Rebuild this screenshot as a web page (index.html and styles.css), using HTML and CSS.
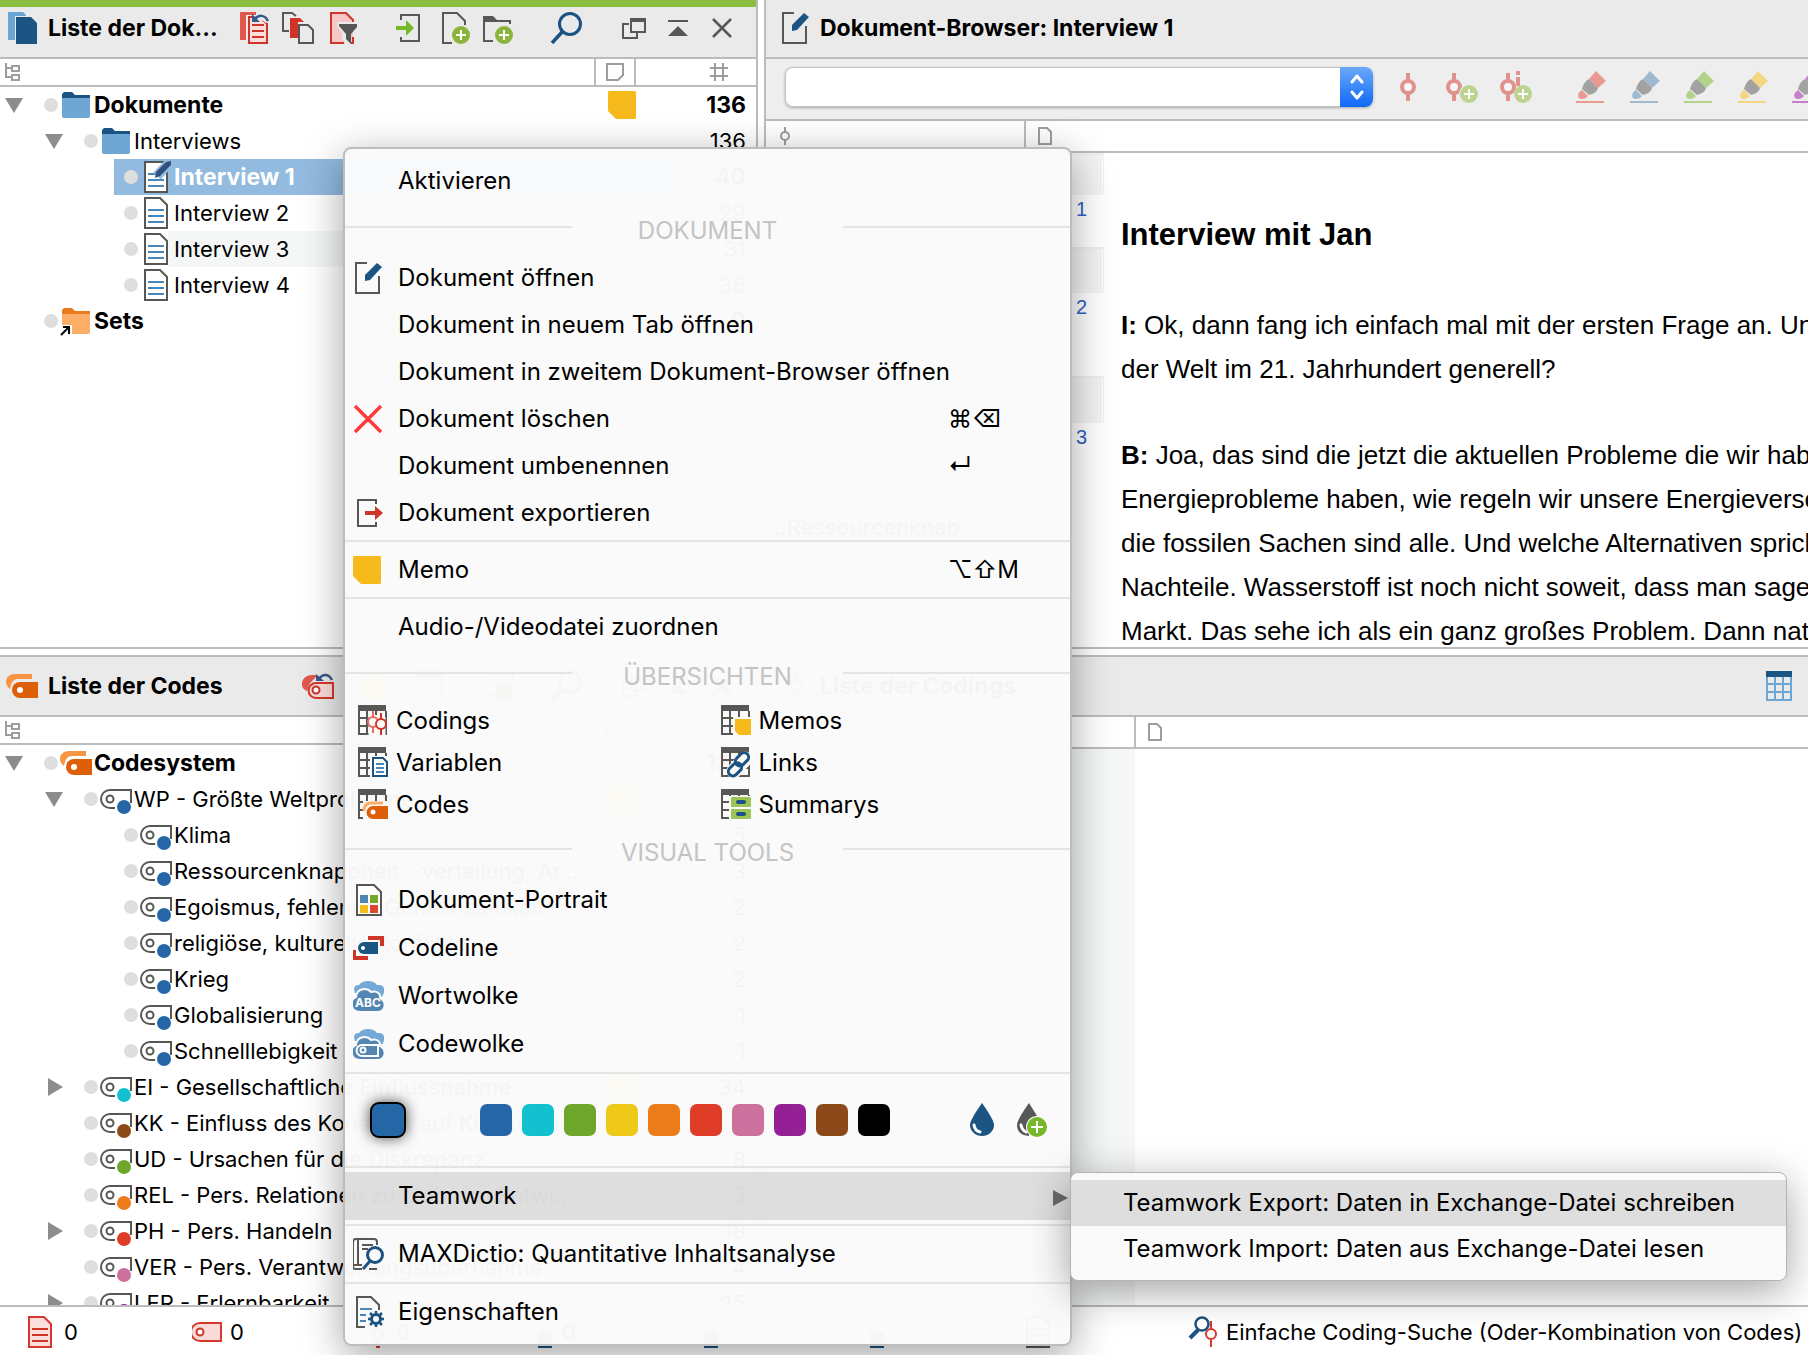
FILE: index.html
```html
<!DOCTYPE html>
<html lang="de">
<head>
<meta charset="utf-8">
<title>Interview 1</title>
<link rel="stylesheet" href="styles.css">
</head>
<body>
<svg class="defs" aria-hidden="true">
  <symbol id="i-docs" viewBox="0 0 32 32"><path fill="#69a5d5" d="M2 0h15l3 3v1H9v24H2z"/><path fill="#1b5382" d="M10 5h15l6 6v21H10z"/></symbol>
  <symbol id="i-reset" viewBox="0 0 32 32"><path fill="#e0594c" d="M2 0h16v3H8v25H2z"/><path fill="#fbdedb" stroke="#cf3527" stroke-width="2" d="M11 5h11l7 7v19H11z"/><path stroke="#cf3527" stroke-width="2" d="M14 13h12M14 19h12M14 25h12"/><path fill="none" stroke="#eaeaea" stroke-width="6" d="M17 8c5-5 11-3 13 2"/><path fill="none" stroke="#35588a" stroke-width="2.500" d="M17 7c4-5 10-4 13 2"/><path fill="#35588a" d="M14 2v8h8z"/></symbol>
  <symbol id="i-copies" viewBox="0 0 32 32"><path fill="none" stroke="#575756" stroke-width="2" d="M7 19H1V1h9l4 3"/><path fill="#cf3527" d="M8 6h10l4 4h-6v16H8z"/><path fill="none" stroke="#575756" stroke-width="2" d="M17 13h9l5 5v13H17z"/></symbol>
  <symbol id="i-filter" viewBox="0 0 32 32"><path fill="#f7c6c6" d="M5 1h14l8 8v22H5z"/><path fill="none" stroke="#cf3527" stroke-width="2" d="M27 10V8l-7-7H5v30h13M27 25v6h-2"/><path fill="#eaeaea" d="M11 10h20v5l-6 6v11h-4l-5-5v-6l-5-7z"/><path fill="#575756" d="M13 12h18v3l-6 7v10l-5-5v-5l-7-8z"/></symbol>
  <symbol id="i-import" viewBox="0 0 32 32"><path fill="none" stroke="#575756" stroke-width="2" d="M7 8V3h18v26H7v-4"/><path fill="#76b82a" d="M2 14h10V8l8 8-8 8v-6H2z"/></symbol>
  <symbol id="i-docplus" viewBox="0 0 32 32"><path fill="none" stroke="#575756" stroke-width="2" d="M14 31H5V1h14l8 8v4"/><circle cx="23" cy="23" r="9" fill="#8ab53a"/><path stroke="#fff" stroke-width="2" d="M23 18v10M18 23h10"/></symbol>
  <symbol id="i-folderplus" viewBox="0 0 32 32"><path fill="#575756" d="M1 4h10l4 4h14v4h-2v-2H3v18h8v2H1z"/><circle cx="22" cy="23" r="9" fill="#8ab53a"/><path stroke="#fff" stroke-width="2" d="M22 18v10M17 23h10"/></symbol>
  <symbol id="i-search" viewBox="0 0 32 32"><circle cx="20" cy="12" r="10.500" fill="none" stroke="#1b5382" stroke-width="3"/><path stroke="#1b5382" stroke-width="3.500" d="M13 19L2 31"/></symbol>
  <symbol id="i-windows" viewBox="0 0 32 32"><path fill="none" stroke="#575756" stroke-width="2" d="M11 12H5v14h14v-5M13 7h14v13H13z"/><path fill="#575756" d="M12 6h16v4H12z"/></symbol>
  <symbol id="i-up" viewBox="0 0 32 32"><path fill="#575756" d="M6 8h20v2H6zM16 14l10 10H6z"/></symbol>
  <symbol id="i-close" viewBox="0 0 32 32"><path stroke="#575756" stroke-width="2.500" d="M7 7l18 18M25 7L7 25"/></symbol>
  <symbol id="i-tree" viewBox="0 0 16 18"><path fill="none" stroke="#9d9d9c" stroke-width="2" d="M1 0v14h5M1 5h5M7 3h7v5H7zM7 12h7v5H7z"/></symbol>
  <symbol id="i-note" viewBox="0 0 18 18"><path fill="none" stroke="#9d9d9c" stroke-width="2" d="M1 1h16v11l-5 5H1z"/></symbol>
  <symbol id="i-hash" viewBox="0 0 18 18"><path stroke="#9d9d9c" stroke-width="2" d="M5 0v18M13 0v18M0 5h18M0 13h18"/></symbol>
  <symbol id="i-page" viewBox="0 0 14 18"><path fill="none" stroke="#9d9d9c" stroke-width="2" d="M1 1h8l4 4v12H1z"/></symbol>
  <symbol id="i-pingrey" viewBox="0 0 14 18"><path fill="none" stroke="#9d9d9c" stroke-width="2" d="M7 0v5M7 13v5"/><circle cx="7" cy="9" r="4" fill="none" stroke="#9d9d9c" stroke-width="2"/></symbol>
  <symbol id="i-folder" viewBox="0 0 32 32"><path fill="#1b5382" d="M2 5l2-2h8l3 3h15v5H2z"/><path fill="#6ea6d4" d="M2 9h28v18a2 2 0 0 1-2 2H4a2 2 0 0 1-2-2z"/></symbol>
  <symbol id="i-sets" viewBox="0 0 32 32"><path fill="#ea7a1b" d="M2 5l2-2h8l3 3h15v5H2z"/><path fill="#fcad68" d="M2 9h28v18a2 2 0 0 1-2 2H4a2 2 0 0 1-2-2z"/><path fill="#fff" d="M2 20h10v10H2z"/><path fill="none" stroke="#000" stroke-width="2" d="M1 30l8-8M3 22h6v7"/></symbol>
  <symbol id="i-doc" viewBox="0 0 32 32"><path fill="#fff" stroke="#575756" stroke-width="2" d="M5 1h15l7 7v23H5z"/><path stroke="#4a86b8" stroke-width="2" d="M8 13h16M8 19h16M8 25h16"/></symbol>
  <symbol id="i-docpen" viewBox="0 0 32 32"><path fill="#fff" stroke="#575756" stroke-width="2" d="M5 1h22v30H5z"/><path stroke="#4a86b8" stroke-width="2" d="M8 13h16M8 19h16M8 25h16"/><path stroke="#92bbdf" stroke-width="10" d="M30 1L17 15"/><path fill="#30507f" d="M26 1l5-1v4L20 15l-5 2 1-6z"/></symbol>
  <symbol id="i-editdoc" viewBox="0 0 32 32"><path fill="none" stroke="#575756" stroke-width="2" d="M14 1H3v30h23V14"/><path fill="#1b5382" d="M24 1l5 4-12 13-5 1 0-6z"/></symbol>
  <symbol id="i-codes" viewBox="0 0 32 32"><path fill="#f79543" d="M26 4v5H12C7 9 5 13 4 19 1 17 0 14 0 12c0-5 4-8 9-8z"/><path fill="#dd5f07" d="M32 12v16H14a8 8 0 0 1 0-16z"/><circle cx="14" cy="20" r="3" fill="#fff"/></symbol>
  <symbol id="i-code" viewBox="0 0 32 32"><path fill="none" stroke="#575756" stroke-width="2" d="M15 25h-5a9 9 0 0 1 0-18h21v13"/><circle cx="10" cy="16" r="3.500" fill="none" stroke="#575756" stroke-width="2"/><circle cx="24" cy="24" r="7" fill="currentColor"/></symbol>
  <symbol id="i-resetcodes" viewBox="0 0 32 32"><path fill="#e0594c" d="M16 5l-6 6c-3 3-4 6-5 10C1 19 0 17 0 14c0-5 4-9 10-9z"/><path fill="#f9dcda" stroke="#d6382b" stroke-width="2" d="M31 13v15H14a7.500 7.500 0 0 1 0-15z"/><circle cx="14" cy="20" r="3.500" fill="#fff" stroke="#cf3527" stroke-width="2"/><path fill="none" stroke="#35588a" stroke-width="2.500" d="M17 9c4-6 10-5 13 1"/><path fill="#35588a" d="M14 4v7h8z"/></symbol>
  <symbol id="i-memo" viewBox="0 0 28 28"><path fill="#f6ba1c" d="M0 1l1-1h26l1 1v26l-1 1H8L0 20z"/></symbol>
  <symbol id="i-tablecolor" viewBox="0 0 32 32"><path fill="none" stroke="#6ea6d4" stroke-width="2" d="M3 6h24v24H3zM11 6v24M19 6v24M3 14h24M3 22h24"/><path fill="#1b5382" d="M2 1h26v6H2z"/></symbol>
  <symbol id="i-smile" viewBox="0 0 32 32"><circle cx="16" cy="16" r="14" fill="#f6ba1c"/></symbol>
  <symbol id="i-codeplus" viewBox="0 0 32 32"><path fill="none" stroke="#575756" stroke-width="2" d="M12 24h-2A9 9 0 0 1 10 4h21v8"/><circle cx="22" cy="22" r="9" fill="#8ab53a"/></symbol>
  <symbol id="i-pin" viewBox="0 0 32 32"><path stroke="#e0938d" stroke-width="4" d="M16 2v9M16 21v9"/><circle cx="16" cy="16" r="6" fill="#f6f6f6" stroke="#e0938d" stroke-width="4"/></symbol>
  <symbol id="i-pinplus" viewBox="0 0 32 32"><path stroke="#e0938d" stroke-width="4" d="M8 2v9M8 21v9"/><circle cx="8" cy="16" r="6" fill="#f6f6f6" stroke="#e0938d" stroke-width="4"/><circle cx="23" cy="23" r="10" fill="#eee"/><circle cx="23" cy="23" r="9" fill="#bcd391"/><path stroke="#fff" stroke-width="2" d="M23 18v10M18 23h10"/></symbol>
  <symbol id="i-pininfo" viewBox="0 0 32 32"><path stroke="#e0938d" stroke-width="4" d="M8 2v9M8 21v9M18 0v4M18 6v9"/><circle cx="8" cy="16" r="6" fill="#f6f6f6" stroke="#e0938d" stroke-width="4"/><circle cx="23" cy="23" r="9" fill="#bcd391"/><path stroke="#fff" stroke-width="2" d="M23 18v10M18 23h10"/></symbol>
  <symbol id="i-marker" viewBox="0 0 32 32"><path fill="currentColor" d="M20 0l10 10-8 7-9-9zM6 19l6 6c-2 3-7 4-9 2-2-3 0-6 3-8zM0 30h28v2H0z"/><path fill="#a3a2a2" d="M13 8l9 9c-1 4-5 6-9 7l-7-6c1-4 3-8 7-10z"/></symbol>
  <symbol id="i-delete" viewBox="0 0 32 32"><path stroke="#ff3b3b" stroke-width="3.500" d="M2 3l26 26M28 3L2 29"/></symbol>
  <symbol id="i-export" viewBox="0 0 32 32"><path fill="none" stroke="#575756" stroke-width="2" d="M23 7V3H5v26h18v-4"/><path fill="#cf3527" d="M12 14h10V9l8 7-8 7v-5H12z"/></symbol>
  <symbol id="i-table" viewBox="0 0 32 32"><path fill="none" stroke="#575756" stroke-width="2" d="M1 6v23h27V6M9 6v23M18 6v23M1 13h27M1 21h27"/><path fill="#575756" d="M0 0h28v6H0z"/></symbol>
  <symbol id="i-t-codings" viewBox="0 0 32 32"><use href="#i-table"/><path stroke="#fafafa" stroke-width="9" d="M15 10v20M23 12v20"/><g fill="#fafafa" stroke-width="2"><path stroke="#f0685c" d="M15 6v6M15 22v6"/><circle cx="15" cy="17" r="5" stroke="#f0685c"/><path stroke="#cf3527" d="M23 8v6M23 24v6"/><circle cx="23" cy="19" r="5" stroke="#cf3527"/></g></symbol>
  <symbol id="i-t-vars" viewBox="0 0 32 32"><use href="#i-table"/><path fill="#fafafa" d="M12 9h20v23H12z"/><path fill="#fff" stroke="#1b5382" stroke-width="2" d="M15 11h10l4 4v14H15z"/><path stroke="#4a86b8" stroke-width="2" d="M18 17h8M18 21h8M18 25h8"/></symbol>
  <symbol id="i-t-codes" viewBox="0 0 32 32"><use href="#i-table"/><path fill="#fafafa" d="M5 12h27v20H5z"/><path fill="none" stroke="#fcad68" stroke-width="3" d="M25 14H13q-7 0-7 8"/><path fill="#dd5f07" d="M30 17v13H15a6.500 6.500 0 0 1 0-13z"/><circle cx="15" cy="23" r="2.500" fill="#fff"/></symbol>
  <symbol id="i-t-memos" viewBox="0 0 32 32"><use href="#i-table"/><path fill="#fafafa" d="M12 12h20v20H12z"/><path fill="#f6ba1c" d="M14 14h16v16H18l-4-4z"/></symbol>
  <symbol id="i-t-links" viewBox="0 0 32 32"><use href="#i-table"/><path stroke="#fafafa" stroke-width="15" stroke-linecap="round" d="M13 24L24 12"/><g fill="none" stroke="#1b5382" stroke-width="3"><rect x="14" y="8" width="15" height="9" rx="4.500" transform="rotate(-45 21 13)"/><rect x="7" y="18" width="15" height="9" rx="4.500" transform="rotate(-45 14 23)"/></g></symbol>
  <symbol id="i-t-sums" viewBox="0 0 32 32"><use href="#i-table"/><path fill="#fafafa" d="M8 7h24v25H8z"/><rect x="10" y="8" width="20" height="10" rx="1" fill="#9dc456"/><rect x="10" y="20" width="20" height="10" rx="1" fill="#9dc456"/><path stroke="#1b5382" stroke-width="4" stroke-linecap="round" d="M17 13h6M17 25h6"/></symbol>
  <symbol id="i-portrait" viewBox="0 0 32 32"><path fill="#fff" stroke="#575756" stroke-width="2" d="M4 1h17l7 7v23H4z"/><path fill="#4f85b5" d="M7 11h8v8H7z"/><path fill="#76a82c" d="M17 11h8v8h-8z"/><path fill="#f6ba1c" d="M7 21h8v8H7z"/><path fill="#dd4730" d="M17 21h8v8h-8z"/></symbol>
  <symbol id="i-codeline" viewBox="0 0 32 32"><path fill="#cf3527" d="M15 4h16v10h-4V8H15zM-1 18h4v6h12v4H-1z"/><path fill="#1b5382" d="M25 10v12H11a6 6 0 0 1 0-12z"/><circle cx="10" cy="16" r="2" fill="#fff"/></symbol>
  <symbol id="i-cloud" viewBox="0 0 32 32"><path fill="#72a9d9" d="M2 13Q-1 5 6 5 9 1 15 1q6 0 9 4 8-1 7 6 0 4-3 6z"/><path fill="#5486b3" stroke="#fafafa" stroke-width="2" d="M8 32C-3 32-4 20 3 17 4 8 14 7 18 12c6-2 10 2 9 6 7 4 6 14-3 14z"/></symbol>
  <symbol id="i-wordcloud" viewBox="0 0 32 32"><use href="#i-cloud"/><text x="15" y="27" text-anchor="middle" font-family="Inter, sans-serif" font-weight="700" font-size="12" fill="#fff">ABC</text></symbol>
  <symbol id="i-codecloud" viewBox="0 0 32 32"><use href="#i-cloud"/><path fill="none" stroke="#fff" stroke-width="2" d="M25 17v11H9a5.500 5.500 0 0 1 0-11z"/><circle cx="10" cy="22" r="2.500" fill="none" stroke="#fff" stroke-width="2"/></symbol>
  <symbol id="i-drop" viewBox="0 0 32 34"><path fill="#1b5382" d="M16 0q12 17 12 22a12 11 0 0 1-24 0Q4 17 16 0z"/><path fill="none" stroke="#fff" stroke-width="3" stroke-linecap="round" d="M8 22q1 6 6 7"/></symbol>
  <symbol id="i-dropplus" viewBox="0 0 32 34"><path fill="#575756" d="M12 0q5 8 8 13l-8 8v12Q0 32 0 22 0 17 12 0z"/><path fill="none" stroke="#fff" stroke-width="3" stroke-linecap="round" d="M4 22q1 5 5 7"/><circle cx="20" cy="24" r="11" fill="#fafafa"/><circle cx="20" cy="24" r="10" fill="#76b82a"/><path stroke="#fff" stroke-width="2" d="M20 18v12M14 24h12"/></symbol>
  <symbol id="i-dictio" viewBox="0 0 32 32"><path fill="none" stroke="#575756" stroke-width="2" d="M9 31H2q-2 0-2-3V4q0-3 3-3h18q3 0 3 3v3M5 1v26M0 27h9M16 31h8M9 7h11M9 11h6"/><circle cx="22" cy="17" r="7.500" fill="none" stroke="#1b5382" stroke-width="3"/><path stroke="#1b5382" stroke-width="3" d="M17 23l-7 8"/></symbol>
  <symbol id="i-props" viewBox="0 0 32 32"><path fill="none" stroke="#575756" stroke-width="2" d="M12 31H4V1h14l8 8v5"/><path stroke="#4a86b8" stroke-width="2" d="M7 13h12M7 19h6M7 25h6"/><circle cx="23" cy="23" r="4.500" fill="none" stroke="#1b5382" stroke-width="3"/><path stroke="#1b5382" stroke-width="2.500" d="M23 15v3M23 28v3M15 23h3M28 23h3M17 17l3 3M26 26l3 3M29 17l-3 3M20 26l-3 3"/></symbol>
  <symbol id="i-docred" viewBox="0 0 32 32"><path fill="#fbdedd" stroke="#d6382b" stroke-width="2" d="M3 1h15l7 7v23H3z"/><path stroke="#cf3527" stroke-width="2" d="M6 13h16M6 19h16M6 25h16"/></symbol>
  <symbol id="i-tagred" viewBox="0 0 32 32"><path fill="#f9dcda" stroke="#d6382b" stroke-width="2" d="M29 7v18H8A9 9 0 0 1 8 7z"/><circle cx="8" cy="16" r="3.500" fill="#fff" stroke="#cf3527" stroke-width="2"/></symbol>
  <symbol id="i-pinred" viewBox="0 0 32 32"><path stroke="#cf3527" stroke-width="4" d="M20 4v9M20 23v9"/><circle cx="20" cy="18" r="5" fill="none" stroke="#cf3527" stroke-width="3"/></symbol>
  <symbol id="i-blue" viewBox="0 0 32 32"><path fill="#1b5382" d="M14 16h14v16H14z"/></symbol>
  <symbol id="i-codesearch" viewBox="0 0 32 32"><circle cx="14" cy="8" r="6.500" fill="none" stroke="#1b5382" stroke-width="2.500"/><path stroke="#1b5382" stroke-width="4" d="M10 14l-8 8"/><path stroke="#d6382b" stroke-width="2" d="M23 5v8M23 24v7"/><circle cx="23" cy="18" r="5" fill="#fff" stroke="#d6382b" stroke-width="2"/></symbol>
</svg>

<div class="app">
  <main class="workspace">
    <section class="panel docs" aria-label="Liste der Dokumente">
      <header class="bar bar-green">
        <svg class="ic"><use href="#i-docs"/></svg>
        <h2 class="bar-title">Liste der Dok...</h2>
        <div class="tools">
          <div class="group"><button aria-label="Aktivierungen zurücksetzen"><svg class="ic"><use href="#i-reset"/></svg></button><button aria-label="Nur aktivierte Dokumente"><svg class="ic"><use href="#i-copies"/></svg></button><button aria-label="Filter"><svg class="ic"><use href="#i-filter"/></svg></button></div>
          <div class="group"><button aria-label="Importieren"><svg class="ic"><use href="#i-import"/></svg></button><button aria-label="Neues Dokument"><svg class="ic"><use href="#i-docplus"/></svg></button><button aria-label="Neue Dokumentgruppe"><svg class="ic"><use href="#i-folderplus"/></svg></button></div>
          <div class="group"><button aria-label="Suchen"><svg class="ic"><use href="#i-search"/></svg></button></div>
          <div class="group"><button aria-label="Abdocken"><svg class="ic"><use href="#i-windows"/></svg></button><button aria-label="Minimieren"><svg class="ic"><use href="#i-up"/></svg></button><button aria-label="Schließen"><svg class="ic"><use href="#i-close"/></svg></button></div>
        </div>
      </header>
      <div class="cols"><span class="col-name"><svg class="ic-tree"><use href="#i-tree"/></svg></span><span class="col-memo"><svg class="ic-18"><use href="#i-note"/></svg></span><span class="col-count"><svg class="ic-18"><use href="#i-hash"/></svg></span></div>
      <ul class="tree">
        <li class="row strong"><span class="twist down"></span><span class="cell"><i class="dot"></i><svg class="ic"><use href="#i-folder"/></svg>Dokumente</span><svg class="memo"><use href="#i-memo"/></svg><span class="count">136</span></li>
        <li class="row l1"><span class="twist down"></span><span class="cell"><i class="dot"></i><svg class="ic"><use href="#i-folder"/></svg>Interviews</span><span class="count">136</span></li>
        <li class="row l2 strong selected"><span class="twist"></span><span class="cell"><i class="dot"></i><svg class="ic"><use href="#i-docpen"/></svg>Interview 1</span><span class="count">40</span></li>
        <li class="row l2"><span class="twist"></span><span class="cell"><i class="dot"></i><svg class="ic"><use href="#i-doc"/></svg>Interview 2</span><span class="count">29</span></li>
        <li class="row l2 striped"><span class="twist"></span><span class="cell"><i class="dot"></i><svg class="ic"><use href="#i-doc"/></svg>Interview 3</span><span class="count">31</span></li>
        <li class="row l2"><span class="twist"></span><span class="cell"><i class="dot"></i><svg class="ic"><use href="#i-doc"/></svg>Interview 4</span><span class="count">36</span></li>
        <li class="row strong"><span class="twist"></span><span class="cell"><i class="dot"></i><svg class="ic"><use href="#i-sets"/></svg>Sets</span><span class="count">0</span></li>
      </ul>
    </section>

    <section class="panel browser" aria-label="Dokument-Browser">
      <header class="bar">
        <svg class="ic"><use href="#i-editdoc"/></svg>
        <h2 class="bar-title">Dokument-Browser: Interview 1</h2>
      </header>
      <div class="toolbar">
        <div class="combo"><select aria-label="Code"><option></option></select><span class="combo-cap"><svg viewBox="0 0 16 26"><path fill="none" stroke="#fff" stroke-width="3" stroke-linecap="round" stroke-linejoin="round" d="M3 8l5-6 5 6M3 18l5 6 5-6"/></svg></span></div>
        <div class="marks"><button aria-label="Codieren"><svg class="ic"><use href="#i-pin"/></svg></button><button aria-label="Mit neuem Code codieren"><svg class="ic"><use href="#i-pinplus"/></svg></button><button aria-label="In-Vivo codieren"><svg class="ic"><use href="#i-pininfo"/></svg></button></div>
        <div class="marks"><button class="m-red" aria-label="Rot markieren"><svg class="ic"><use href="#i-marker"/></svg></button><button class="m-blue" aria-label="Blau markieren"><svg class="ic"><use href="#i-marker"/></svg></button><button class="m-green" aria-label="Grün markieren"><svg class="ic"><use href="#i-marker"/></svg></button><button class="m-yellow" aria-label="Gelb markieren"><svg class="ic"><use href="#i-marker"/></svg></button><button class="m-violet" aria-label="Violett markieren"><svg class="ic"><use href="#i-marker"/></svg></button></div>
      </div>
      <div class="cols cols-doc"><span class="col-codes"><svg class="ic-page"><use href="#i-pingrey"/></svg></span><span class="col-page"><svg class="ic-page"><use href="#i-page"/></svg></span></div>
      <div class="reader">
        <div class="stripes">..Ressourcenknap</div>
        <div class="gutter">
          <span class="para p1">1</span>
          <span class="para p2">2</span>
          <span class="para p3">3</span>
        </div>
        <article class="text">
          <h1>Interview mit Jan</h1>
          <p><b>I:</b> Ok, dann fang ich einfach mal mit der ersten Frage an. Und<br>der Welt im 21. Jahrhundert generell?</p>
          <p><b>B:</b> Joa, das sind die jetzt die aktuellen Probleme die wir haben<br>Energieprobleme haben, wie regeln wir unsere Energieversorgung<br>die fossilen Sachen sind alle. Und welche Alternativen sprich<br>Nachteile. Wasserstoff ist noch nicht soweit, dass man sagen<br>Markt. Das sehe ich als ein ganz großes Problem. Dann natürlich</p>
        </article>
      </div>
    </section>

    <section class="panel codes" aria-label="Liste der Codes">
      <header class="bar">
        <svg class="ic"><use href="#i-codes"/></svg>
        <h2 class="bar-title">Liste der Codes</h2>
        <div class="tools">
          <div class="group wide"><button aria-label="Code-Aktivierungen zurücksetzen"><svg class="ic"><use href="#i-resetcodes"/></svg></button><button aria-label="Emoticode"><svg class="ic"><use href="#i-smile"/></svg></button><button aria-label="Tabelle"><svg class="ic"><use href="#i-tablecolor"/></svg></button></div>
          <div class="group"><button aria-label="Neuer Code"><svg class="ic"><use href="#i-codeplus"/></svg></button></div>
          <div class="group"><button aria-label="Suchen"><svg class="ic"><use href="#i-search"/></svg></button></div>
          <div class="group"><button aria-label="Abdocken"><svg class="ic"><use href="#i-windows"/></svg></button><button aria-label="Minimieren"><svg class="ic"><use href="#i-up"/></svg></button><button aria-label="Schließen"><svg class="ic"><use href="#i-close"/></svg></button></div>
        </div>
      </header>
      <div class="cols"><span class="col-name"><svg class="ic-tree"><use href="#i-tree"/></svg></span><span class="col-memo"><svg class="ic-18"><use href="#i-note"/></svg></span><span class="col-count"></span></div>
      <ul class="tree">
        <li class="row strong"><span class="twist down"></span><span class="cell"><i class="dot"></i><svg class="ic"><use href="#i-codes"/></svg>Codesystem</span><span class="count">136</span></li>
        <li class="row l1 c-blue"><span class="twist down"></span><span class="cell"><i class="dot"></i><svg class="ic"><use href="#i-code"/></svg>WP - Größte Weltprobleme</span><svg class="memo"><use href="#i-memo"/></svg><span class="count">0</span></li>
        <li class="row l2 c-blue"><span class="twist"></span><span class="cell"><i class="dot"></i><svg class="ic"><use href="#i-code"/></svg>Klima</span><span class="count">5</span></li>
        <li class="row l2 c-blue"><span class="twist"></span><span class="cell"><i class="dot"></i><svg class="ic"><use href="#i-code"/></svg>Ressourcenknappheit, -verteilung, Ar...</span><span class="count">3</span></li>
        <li class="row l2 c-blue"><span class="twist"></span><span class="cell"><i class="dot"></i><svg class="ic"><use href="#i-code"/></svg>Egoismus, fehlende Gemeinsamkeit</span><span class="count">2</span></li>
        <li class="row l2 c-blue"><span class="twist"></span><span class="cell"><i class="dot"></i><svg class="ic"><use href="#i-code"/></svg>religiöse, kulturelle Konflikte</span><span class="count">2</span></li>
        <li class="row l2 c-blue"><span class="twist"></span><span class="cell"><i class="dot"></i><svg class="ic"><use href="#i-code"/></svg>Krieg</span><span class="count">2</span></li>
        <li class="row l2 c-blue"><span class="twist"></span><span class="cell"><i class="dot"></i><svg class="ic"><use href="#i-code"/></svg>Globalisierung</span><span class="count">1</span></li>
        <li class="row l2 c-blue"><span class="twist"></span><span class="cell"><i class="dot"></i><svg class="ic"><use href="#i-code"/></svg>Schnelllebigkeit</span><span class="count">1</span></li>
        <li class="row l1 c-cyan"><span class="twist right"></span><span class="cell"><i class="dot"></i><svg class="ic"><use href="#i-code"/></svg>EI - Gesellschaftliche Einflussnahme</span><svg class="memo"><use href="#i-memo"/></svg><span class="count">34</span></li>
        <li class="row l1 c-brown"><span class="twist"></span><span class="cell"><i class="dot"></i><svg class="ic"><use href="#i-code"/></svg>KK - Einfluss des Konsums auf Klimawandel</span><span class="count">7</span></li>
        <li class="row l1 c-green"><span class="twist"></span><span class="cell"><i class="dot"></i><svg class="ic"><use href="#i-code"/></svg>UD - Ursachen für die Diskrepanz</span><span class="count">8</span></li>
        <li class="row l1 c-orange"><span class="twist"></span><span class="cell"><i class="dot"></i><svg class="ic"><use href="#i-code"/></svg>REL - Pers. Relationen zu globalen Entwi...</span><span class="count">3</span></li>
        <li class="row l1 c-red"><span class="twist right"></span><span class="cell"><i class="dot"></i><svg class="ic"><use href="#i-code"/></svg>PH - Pers. Handeln</span><span class="count">18</span></li>
        <li class="row l1 c-pink"><span class="twist"></span><span class="cell"><i class="dot"></i><svg class="ic"><use href="#i-code"/></svg>VER - Pers. Verantwortungsübernahme</span><span class="count">4</span></li>
        <li class="row l1 c-violet"><span class="twist right"></span><span class="cell"><i class="dot"></i><svg class="ic"><use href="#i-code"/></svg>LER - Erlernbarkeit</span><span class="count">25</span></li>
      </ul>
    </section>

    <section class="panel codings" aria-label="Liste der Codings">
      <header class="bar">
        <svg class="ic"><use href="#i-pin"/></svg>
        <h2 class="bar-title">Liste der Codings</h2>
        <div class="tools"><button aria-label="Überblick Codings"><svg class="ic"><use href="#i-tablecolor"/></svg></button></div>
      </header>
      <div class="cols cols-doc"><span class="col-wide"></span><span class="col-page"><svg class="ic-page"><use href="#i-page"/></svg></span></div>
      <div class="results"></div>
    </section>
  </main>

  <footer class="status">
    <span class="stat"><svg class="ic"><use href="#i-docred"/></svg>0</span>
    <span class="stat"><svg class="ic"><use href="#i-tagred"/></svg>0</span>
    <span class="stat"><svg class="ic"><use href="#i-pinred"/></svg>0</span>
    <span class="stat"><svg class="ic"><use href="#i-blue"/></svg>0</span>
    <span class="stat"><svg class="ic"><use href="#i-blue"/></svg></span>
    <span class="stat"><svg class="ic"><use href="#i-blue"/></svg></span>
    <span class="stat"><svg class="ic"><use href="#i-doc"/></svg></span>
    <span class="stat stat-query"><svg class="ic"><use href="#i-codesearch"/></svg>Einfache Coding-Suche (Oder-Kombination von Codes)</span>
  </footer>
</div>

<ul class="menu context">
  <li><button class="item">Aktivieren</button></li>
  <li class="heading"><span>DOKUMENT</span></li>
  <li><button class="item"><svg class="ic"><use href="#i-editdoc"/></svg>Dokument öffnen</button></li>
  <li><button class="item">Dokument in neuem Tab öffnen</button></li>
  <li><button class="item">Dokument in zweitem Dokument-Browser öffnen</button></li>
  <li><button class="item"><svg class="ic"><use href="#i-delete"/></svg>Dokument löschen<kbd>⌘⌫</kbd></button></li>
  <li><button class="item">Dokument umbenennen<kbd>↵</kbd></button></li>
  <li><button class="item"><svg class="ic"><use href="#i-export"/></svg>Dokument exportieren</button></li>
  <li class="sep"></li>
  <li><button class="item"><svg class="ic-note"><use href="#i-memo"/></svg>Memo<kbd>⌥⇧M</kbd></button></li>
  <li class="sep"></li>
  <li><button class="item">Audio-/Videodatei zuordnen</button></li>
  <li class="heading"><span>ÜBERSICHTEN</span></li>
  <li class="overviews">
    <button><svg class="ic"><use href="#i-t-codings"/></svg>Codings</button>
    <button><svg class="ic"><use href="#i-t-memos"/></svg>Memos</button>
    <button><svg class="ic"><use href="#i-t-vars"/></svg>Variablen</button>
    <button><svg class="ic"><use href="#i-t-links"/></svg>Links</button>
    <button><svg class="ic"><use href="#i-t-codes"/></svg>Codes</button>
    <button><svg class="ic"><use href="#i-t-sums"/></svg>Summarys</button>
  </li>
  <li class="heading"><span>VISUAL TOOLS</span></li>
  <li><button class="item tall"><svg class="ic"><use href="#i-portrait"/></svg>Dokument-Portrait</button></li>
  <li><button class="item tall"><svg class="ic"><use href="#i-codeline"/></svg>Codeline</button></li>
  <li><button class="item tall"><svg class="ic"><use href="#i-wordcloud"/></svg>Wortwolke</button></li>
  <li><button class="item tall"><svg class="ic"><use href="#i-codecloud"/></svg>Codewolke</button></li>
  <li class="sep"></li>
  <li class="palette">
    <button class="swatch current bg-blue" aria-label="Aktuelle Farbe"></button>
    <div class="swatches">
      <button class="swatch bg-blue" aria-label="Blau"></button><button class="swatch bg-cyan" aria-label="Türkis"></button><button class="swatch bg-green" aria-label="Grün"></button><button class="swatch bg-yellow" aria-label="Gelb"></button><button class="swatch bg-orange" aria-label="Orange"></button><button class="swatch bg-red" aria-label="Rot"></button><button class="swatch bg-pink" aria-label="Rosa"></button><button class="swatch bg-violet" aria-label="Violett"></button><button class="swatch bg-brown" aria-label="Braun"></button><button class="swatch bg-black" aria-label="Schwarz"></button>
    </div>
    <div class="drops"><button aria-label="Weitere Farben"><svg class="ic-drop"><use href="#i-drop"/></svg></button><button aria-label="Eigene Farbe hinzufügen"><svg class="ic-drop"><use href="#i-dropplus"/></svg></button></div>
  </li>
  <li class="sep"></li>
  <li class="has-sub">
    <button class="item tall active" aria-haspopup="true">Teamwork<span class="arrow"></span></button>
    <ul class="menu submenu">
      <li><button class="item active">Teamwork Export: Daten in Exchange-Datei schreiben</button></li>
      <li><button class="item">Teamwork Import: Daten aus Exchange-Datei lesen</button></li>
    </ul>
  </li>
  <li class="sep"></li>
  <li><button class="item tall"><svg class="ic"><use href="#i-dictio"/></svg>MAXDictio: Quantitative Inhaltsanalyse</button></li>
  <li class="sep"></li>
  <li><button class="item tall"><svg class="ic"><use href="#i-props"/></svg>Eigenschaften</button></li>
</ul>
</body>
</html>
```
FILE: styles.css
```css
* { box-sizing: border-box; }
html, body { height: 100%; }
body {
  margin: 0;
  overflow: hidden;
  background: #fff;
  color: #000;
  font: 400 22px/36px Inter, "Liberation Sans", sans-serif;
}
button {
  margin: 0;
  padding: 0;
  border: 0;
  background: none;
  color: inherit;
  font: inherit;
  text-align: left;
}
ul { margin: 0; padding: 0; list-style: none; }
.defs { display: none; }
svg { display: block; flex: none; overflow: visible; }
.ic { width: 32px; height: 32px; }
.ic-tree { width: 16px; height: 18px; }
.ic-18 { width: 18px; height: 18px; }
.ic-page { width: 14px; height: 18px; }

/* frame */
.app { display: flex; flex-direction: column; height: 100vh; }
.workspace {
  flex: 1;
  min-height: 0;
  display: grid;
  grid-template-columns: minmax(0, 758fr) minmax(0, 1044fr);
  grid-template-rows: minmax(0, 649fr) minmax(0, 650fr);
  gap: 6px;
}
.panel { display: flex; flex-direction: column; min-width: 0; overflow: hidden; }
.docs, .codes { border-right: 2px solid #bcbcbc; }
.browser, .codings { border-left: 2px solid #bcbcbc; }
.docs, .browser { border-bottom: 2px solid #bcbcbc; }
.codes, .codings { border-top: 2px solid #bcbcbc; }

.bar {
  flex: none;
  display: flex;
  align-items: center;
  height: 59px;
  padding: 0 18px 2px 6px;
  background: #eaeaea;
  border-bottom: 2px solid #bcbcbc;
}
.bar-green { box-shadow: inset 0 7px #8cbf3f; }
.codes .bar, .codings .bar { height: 60px; padding-bottom: 0; }
.browser .bar, .codings .bar { padding-left: 14px; padding-right: 12px; }
.bar-title { margin: 0 0 0 10px; font-size: 23px; font-weight: 700; white-space: nowrap; }
.browser .bar-title, .codings .bar-title { margin-left: 8px; }
.tools { display: flex; gap: 36px; margin-left: auto; }
.group { display: flex; gap: 12px; }
.group.wide { gap: 24px; }

.cols {
  flex: none;
  display: flex;
  height: 28px;
  border-bottom: 2px solid #bcbcbc;
}
.cols-doc { height: 32px; }
.cols span { display: flex; align-items: center; }
.col-name { flex: 1; padding-left: 5px; }
.col-memo { width: 42px; justify-content: center; border: solid #bcbcbc; border-width: 0 2px; }
.col-count { width: 120px; padding-left: 74px; }
.col-codes { width: 260px; padding-left: 12px; border-right: 2px solid #bcbcbc; }
.col-wide { width: 370px; border-right: 2px solid #bcbcbc; }
.col-page { padding-left: 12px; }

/* trees */
.tree { flex: 1; min-height: 0; overflow: hidden; }
.row { display: flex; align-items: center; height: 36px; padding-right: 10px; color: #000; white-space: nowrap; }
.row.l1 { padding-left: 40px; }
.row.l2 { padding-left: 80px; }
.strong { font-size: 23px; font-weight: 700; }
.twist { width: 34px; padding-left: 5px; }
.twist::before { content: ""; display: block; width: 0; }
.down::before { border: solid transparent; border-width: 15px 9px 0; border-top-color: #8c8c8c; }
.right::before { margin-left: 3px; border: solid transparent; border-width: 9px 0 9px 15px; border-left-color: #8c8c8c; }
.cell { flex: 1; display: flex; align-items: center; height: 36px; padding-left: 10px; }
.cell .ic { margin: 0 2px; }
.dot { width: 14px; height: 14px; border-radius: 50%; background: #dedede; }
.memo { width: 28px; height: 28px; margin-right: 48px; }
.count { width: 62px; text-align: right; }
.selected .cell { background: #92bbdf; color: #fff; }
.striped .cell { background: linear-gradient(90deg, transparent 54px, #f5f7f7 54px); }
.c-blue svg { color: #2567a6; }
.c-cyan svg { color: #12c0cf; }
.c-brown svg { color: #8c4816; }
.c-green svg { color: #6ea62b; }
.c-orange svg { color: #ec7c1a; }
.c-red svg { color: #df3d28; }
.c-pink svg { color: #cc709d; }
.c-violet svg { color: #951f95; }

/* document browser */
.toolbar {
  flex: none;
  display: flex;
  align-items: center;
  gap: 44px;
  height: 62px;
  padding: 0 0 4px 19px;
  background: #eee;
  border-bottom: 2px solid #bcbcbc;
}
.combo { flex: none; display: flex; width: 588px; height: 40px; margin-right: -25px; border-radius: 8px; box-shadow: 0 1px 3px rgba(0, 0, 0, .3); }
.combo select { flex: 1; appearance: none; border: 1px solid #c4c4c4; border-right: 0; border-radius: 8px 0 0 8px; background: #fff; font: inherit; }
.combo-cap { width: 33px; display: grid; place-items: center; border-radius: 0 8px 8px 0; background: linear-gradient(#6aa9f8, #0f68f7); }
.combo-cap svg { width: 16px; height: 26px; }
.marks { display: flex; flex: none; gap: 22px; }
.m-red { color: #e99b92; }
.m-blue { color: #9fb9d1; }
.m-green { color: #b2d38a; }
.m-yellow { color: #f6d57f; }
.m-violet { color: #c77fcb; }

.reader { flex: 1; min-height: 0; display: flex; overflow: hidden; }
.stripes { flex: none; width: 260px; padding: 356px 0 0 8px; white-space: nowrap; overflow: hidden; }
.gutter { flex: none; width: 78px; font: 20px/28px "Liberation Sans", Arial, sans-serif; color: #2f60c6; }
.para { display: block; padding-right: 17px; border-top: 2px solid #eee; text-align: right; background: linear-gradient(90deg, #f3f3f3 76px, #fff 76px, #fff 77px, #f0f0f0 77px) no-repeat; }
.p1 { height: 94px; padding-top: 40px; background-size: 100% 40px; }
.p2 { height: 129px; padding-top: 44px; background-size: 100% 44px; }
.p3 { padding-top: 45px; background-size: 100% 45px; }
.text { flex: none; padding: 60px 0 0 17px; font: 26px/44px "Liberation Sans", Arial, sans-serif; white-space: nowrap; }
.text h1 { margin: 0 0 46px; font-size: 31px; line-height: 44px; }
.text p { margin: 0 0 42px; }
.results { flex: 1; width: 369px; background: #f5f7f7; }

.status { flex: none; display: flex; align-items: center; height: 50px; padding: 2px 0 0 26px; border-top: 2px solid #bcbcbc; }
.stat { flex: none; display: flex; align-items: center; gap: 6px; width: 166px; white-space: nowrap; }
.stat-query { width: auto; }

/* menus */
.menu {
  position: absolute;
  padding: 8px 0;
  border: 2px solid #bdbdbd;
  border-radius: 8px;
  background: rgba(250, 250, 250, .975);
  box-shadow: 0 10px 40px rgba(0, 0, 0, .36);
  font-size: 24px;
}
.context { left: 343px; top: 147px; width: 729px; }
.item { position: relative; display: flex; align-items: center; width: 100%; height: 47px; padding-left: 53px; white-space: nowrap; }
.item.tall { height: 48px; }
.item .ic { margin: 0 13px 0 -45px; }
.item .ic-note { width: 28px; height: 28px; margin: 0 17px 0 -45px; }
.item.active { background: rgba(0, 0, 0, .11); }
.item kbd { position: absolute; left: 603px; font: inherit; }
.arrow { margin: 4px 2px 0 auto; border: solid transparent; border-width: 8px 0 8px 15px; border-left-color: #6b6b6b; }
.heading { display: grid; grid-template-columns: 227px 1fr 227px; height: 50px; padding-top: 22px; color: #c4c4c4; }
.heading span { margin-top: -13px; text-align: center; }
.heading::before, .heading::after { content: ""; height: 2px; background: #e4e4e4; }
.sep { height: 10px; padding-top: 4px; }
.sep::before { content: ""; display: block; height: 2px; background: #e4e4e4; }
.overviews { display: grid; grid-template-columns: 1fr 1fr; }
.overviews button { display: flex; align-items: center; gap: 6px; height: 42px; padding-left: 13px; }
.palette { display: flex; align-items: center; height: 84px; padding-left: 25px; }
.swatch { width: 32px; height: 32px; border-radius: 7px; }
.current { width: 36px; height: 36px; border: 2px solid #000; border-radius: 9px; box-shadow: 0 0 14px rgba(0, 0, 0, .7); }
.swatches { display: flex; gap: 10px; margin-left: 74px; }
.drops { display: flex; gap: 19px; margin: 0 21px 0 auto; }
.ic-drop { width: 32px; height: 34px; }
.bg-blue { background: #2567a6; }
.bg-cyan { background: #12c0cf; }
.bg-green { background: #6ea62b; }
.bg-yellow { background: #eec919; }
.bg-orange { background: #ec7c1a; }
.bg-red { background: #df3d28; }
.bg-pink { background: #cc709d; }
.bg-violet { background: #951f95; }
.bg-brown { background: #8c4816; }
.bg-black { background: #000; }
.has-sub { position: relative; }
.submenu { left: 100%; top: 0; width: 717px; padding: 7px 0 8px; border-width: 1px; border-color: #b4b4b4; background: #fafafa; }
.submenu .item { height: 46px; padding-left: 52px; }
```
